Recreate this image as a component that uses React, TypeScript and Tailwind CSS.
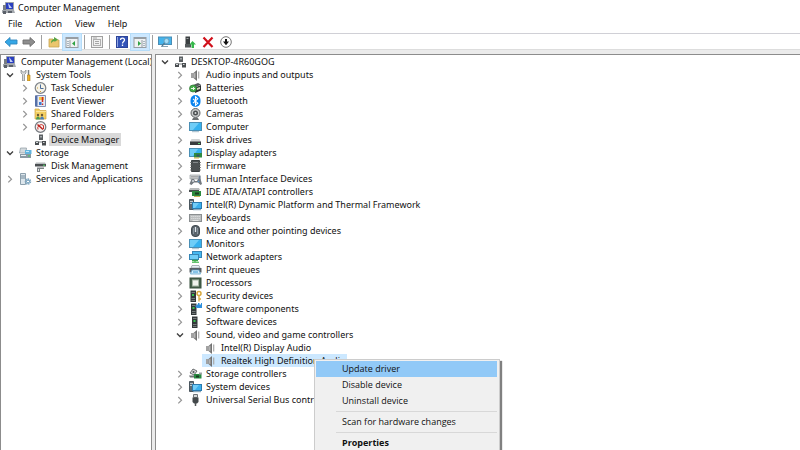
import { useState, type ReactNode } from 'react';

type IconName = keyof typeof icons;

interface TreeNode {
  label: string;
  icon: IconName;
  children?: TreeNode[];
  closed?: boolean;
}

const speaker = (
  <>
    <path d="M2 4h2.500v5H2z" fill="#a2a2a2" />
    <path d="M4.500 4 8 1v11L4.500 9z" fill="#727272" />
    <path d="M5 4.500 6.500 3.500v6L5 8.500z" fill="#b5b5b5" />
    <path d="M9.700 2.500v7" stroke="#a9a9a9" strokeWidth="1.200" fill="none" />
  </>
);

const monitor = (
  <>
    <rect x="0.500" y="1.500" width="12" height="8" fill="#35b1ef" stroke="#4a8fb5" />
    <path d="M1 2h9L4 9H1z" fill="#6fcdf7" />
    <path d="M3 10.700h7" stroke="#a5bcc9" />
  </>
);

const platform = (
  <>
    <path d="M0.500 0.500h4v10h-4z" fill="#5d6a73" stroke="#4a565e" />
    <path d="M1 2.500h3M1 4.500h2" stroke="#b9c6ce" />
    <rect x="3.500" y="3.500" width="9" height="6" fill="#3bb0ee" stroke="#2b7bb0" />
    <path d="M4 4h6L6 9H4z" fill="#72cdf8" />
    <path d="M4 10.700h8" stroke="#7197ae" />
  </>
);

const deviceManager = (
  <>
    <path d="M5 0.500h4V6H5z" fill="#5a5f62" />
    <path d="M6 2h2v1.500H6z" fill="#a4a9ac" />
    <path d="M2 7h9v2H2z" fill="#b9bcbe" />
    <path d="M1 7.500h4V11H1zM8 7h4v4.500H8z" fill="#4a4e51" />
    <path d="M2 8h2v1H2zM9 8h1.500v1H9z" fill="#d5d9db" />
  </>
);

const tower = (
  <>
    <rect x="3" y="0.500" width="5.500" height="11.500" fill="#33383a" />
    <path d="M4 2.500h3.500M4 8.500h3.500M4 10.500h3.500" stroke="#757c7d" />
    <rect x="4.500" y="4" width="2" height="2" fill="#35c24a" />
  </>
);

const icons = {
  speaker,
  monitor,
  platform,
  deviceManager,
  tower,
  console: (
    <>
      <path d="M3.500 0.500h8v7h-8z" fill="#2a3fc0" stroke="#9ba1a9" />
      <path d="M6 1l4 5H7z" fill="#c4d2f7" />
      <path d="M1 3h3v5H1z" fill="#777d85" />
      <path d="M0 8h12l1 3H0z" fill="#a3a8ae" />
      <path d="M1 9h3v3H1zM6 9h4v2H6z" fill="#5b616a" />
    </>
  ),
  tools: (
    <>
      <path d="M2 1v3l1.500 1.500V12h2V5.500L7 4V1L5.500 3h-2z" fill="#d8dadc" stroke="#808588" strokeWidth="0.700" />
      <path d="M9.500 1v5" stroke="#7b8084" strokeWidth="1.500" />
      <path d="M8.500 6h2.500v6H8.500z" fill="#f0b52c" stroke="#a77712" strokeWidth="0.600" />
    </>
  ),
  clock: (
    <>
      <circle cx="6.500" cy="6" r="5.300" fill="#f6f3e8" stroke="#7d8288" strokeWidth="1.200" />
      <path d="M6.500 2.500V6.500H9.500" fill="none" stroke="#4b6d9c" />
      <path d="M3 6h1M6 9.500h1" stroke="#c79a3a" />
    </>
  ),
  event: (
    <>
      <path d="M1.500 0.500h10v11h-10z" fill="#e3e8f3" stroke="#8492b5" />
      <path d="M1 1h2.500v10H1z" fill="#5670a8" />
      <path d="M5 2h5v3H5z" fill="#f0c649" />
      <path d="M8.500 2v5M8.500 8.500v1.500" stroke="#cf2a23" strokeWidth="1.500" />
      <path d="M5 7h2.500v3H5z" fill="#3e79cf" />
    </>
  ),
  sharedFolder: (
    <>
      <path d="M1 1h4l1 1.500h6V11H1z" fill="#f4d063" stroke="#cda543" strokeWidth="0.700" />
      <path d="M2 3.500h10" stroke="#fbe59d" />
      <circle cx="4" cy="7" r="1.200" fill="#6b5836" />
      <circle cx="8" cy="7" r="1.200" fill="#6b5836" />
      <path d="M2 11.500c0-4 4-4 4 0z" fill="#4d9a50" />
      <path d="M6 11.500c0-4 4-4 4 0z" fill="#4b7fb5" />
    </>
  ),
  performance: (
    <>
      <circle cx="6.500" cy="6" r="5.300" fill="#f7f2f2" stroke="#777b80" strokeWidth="1.200" />
      <path d="M4 8.500A3.500 3.500 0 0 1 9.500 4.500V8" fill="none" stroke="#c9322c" />
      <path d="M3.500 3.500 9 8.500" stroke="#bb211c" strokeWidth="1.500" />
    </>
  ),
  storage: (
    <>
      <path d="M1.500 1h6l-0.500 5H0.500z" fill="#d3dade" stroke="#8d9aa2" strokeWidth="0.700" />
      <path d="M1 7h11v4H1z" fill="#8999a3" />
      <path d="M2 8.500h5" stroke="#e9f1f5" />
      <path d="M6 3h6.500v4H6z" fill="#63b4de" />
      <path d="M7 4h3v1H7z" fill="#c6e9f8" />
      <path d="M9 8.500h2v1H9z" fill="#47c95d" />
    </>
  ),
  diskManagement: (
    <>
      <path d="M1 4h11v2.500H1z" fill="#4b4f52" />
      <path d="M2 2.500h9L12 4H1z" fill="#b8bcbe" />
      <path d="M3 7.500h7v1.500H6v3H3z" fill="#7d8285" />
      <path d="M9 4.700h2v1H9z" fill="#4fd164" />
      <path d="M4 9h1v2H4z" fill="#e3e6e7" />
    </>
  ),
  services: (
    <>
      <path d="M1.500 0.500h5v11h-5z" fill="#dde6ec" stroke="#8da0ad" />
      <path d="M2 3h4M2 5h4" stroke="#70899a" />
      <circle cx="9" cy="8.500" r="2.500" fill="none" stroke="#7fa6bf" strokeWidth="1.500" strokeDasharray="1.500 0.700" />
      <circle cx="9" cy="8.500" r="1.500" fill="none" stroke="#5b90b2" />
    </>
  ),
  battery: (
    <>
      <path d="M4 3 9 1l3 1.500-6 3z" fill="#565b5d" />
      <path d="M5 6l7-3v5.500L6 11z" fill="#2c3132" />
      <path d="M8 6l3-1v2L8 8z" fill="#cfd2b8" />
      <circle cx="4" cy="6.500" r="3.500" fill="#46ad4c" stroke="#2c7431" strokeWidth="0.700" />
      <path d="M2 6.500h4M4.500 5v3" stroke="#e8f7e6" />
    </>
  ),
  bluetooth: (
    <>
      <rect x="1.500" y="0" width="10" height="12" rx="5" fill="#0a84f0" />
      <path d="M4 3.800 8.800 8.200 6.500 10.300V1.700L8.800 3.800 4 8.200" fill="none" stroke="#fff" strokeWidth="1.100" />
    </>
  ),
  camera: (
    <>
      <circle cx="6.500" cy="5" r="4.500" fill="#c9cbcc" stroke="#5d6163" strokeWidth="1" />
      <circle cx="6.500" cy="5" r="2.500" fill="#4b4f51" />
      <circle cx="6.500" cy="5" r="1" fill="#d9dcdd" />
      <path d="M4 10h5l1 2H3z" fill="#6a6e70" />
    </>
  ),
  disk: (
    <>
      <path d="M2.500 5h8L12 8H1z" fill="#cfd2d3" />
      <path d="M1 7.500h11v3.500H1z" fill="#373c3e" />
      <path d="M9 9h2v1H9z" fill="#5fd274" />
    </>
  ),
  display: (
    <>
      <rect x="0.500" y="1.500" width="12" height="8" fill="#35b1ef" stroke="#4a8fb5" />
      <path d="M1 2h8L4 9H1z" fill="#6fcdf7" />
      <path d="M5 6h8v4.500H5z" fill="#2f8b41" />
      <path d="M7.500 7.500h3v2h-3z" fill="#37536a" />
      <path d="M5 11h5" stroke="#d8b146" />
    </>
  ),
  firmware: (
    <>
      <path d="M2.500 0.500h8v11h-8z" fill="#4c5052" stroke="#3b4042" />
      <path d="M1 2.500h1.500M1 5h1.500M1 7.500h1.500M1 10h1.500M10.500 2.500H12M10.500 5H12M10.500 7.500H12M10.500 10H12" stroke="#8d8d8d" />
      <path d="M4 2.500h5" stroke="#85898b" />
    </>
  ),
  hid: (
    <>
      <path d="M1 2h10v4H1z" fill="#d3d6d8" stroke="#9a9ea1" strokeWidth="0.700" />
      <path d="M2 3.500h7M2 5h7" stroke="#8a8a8a" strokeWidth="0.600" />
      <path d="M0.500 11 2.500 6H5l1 2h2l1-2h2.500l1.500 5-1.500 1L9 9.500H5L2.500 12z" fill="#747a80" />
      <path d="M10.500 3v4" stroke="#6f7f92" strokeWidth="2" />
      <circle cx="4" cy="8" r="1" fill="#d5dbe0" />
      <circle cx="9.500" cy="8.500" r="0.800" fill="#5a9bd0" />
    </>
  ),
  ide: (
    <>
      <path d="M1 2h9l1 2H0z" fill="#b7babb" />
      <path d="M0 4h10v2H0z" fill="#494e50" />
      <path d="M3 5h9v5H3z" fill="#2c8a3d" />
      <path d="M6 6.500h4v2H6z" fill="#1a3b22" />
      <path d="M5 10.500h6" stroke="#c9b25a" />
    </>
  ),
  keyboard: (
    <>
      <rect x="0.500" y="2.500" width="12" height="7" fill="#bbbebf" stroke="#8a8e90" />
      <path d="M2 4.500h9M2 6.500h9" stroke="#d6d8d9" strokeDasharray="1.500 0.500" />
      <path d="M3.500 8.500h6" stroke="#e0e2e2" />
    </>
  ),
  mouse: (
    <>
      <rect x="2.500" y="0.500" width="8" height="11" rx="3.500" fill="#59636b" stroke="#414a51" />
      <path d="M4.500 3v6M8.500 3v6" stroke="#87929b" />
      <path d="M6.500 2v5" stroke="#dfe5ea" strokeWidth="1.300" />
    </>
  ),
  network: (
    <>
      <rect x="3.500" y="0.500" width="9" height="6" fill="#46b8f0" stroke="#3585b5" />
      <rect x="0.500" y="3.500" width="9" height="5" fill="#6fcdf7" stroke="#3585b5" />
      <path d="M3 9.500h6M6 9v2" stroke="#3faa4c" strokeWidth="1.300" />
      <path d="M3 11.300h7" stroke="#5cc268" strokeWidth="1.300" />
    </>
  ),
  printer: (
    <>
      <path d="M3 1.500h7l1 2.500H2z" fill="#e7eff5" stroke="#8b959c" strokeWidth="0.700" />
      <path d="M0.500 4h12v4.500h-12z" fill="#596066" />
      <path d="M3 6h7l1.500 4h-10z" fill="#d3ecf9" stroke="#4e9bc6" strokeWidth="0.700" />
      <path d="M4 8h5" stroke="#379bd5" />
    </>
  ),
  processor: (
    <>
      <rect x="1" y="1" width="11" height="10" fill="#46614c" stroke="#36503d" strokeWidth="1" />
      <rect x="3.500" y="3" width="6" height="6" fill="#f0f3ee" stroke="#a5b5a5" strokeWidth="1" />
    </>
  ),
  security: (
    <>
      <g transform="translate(-1.500 0)">{tower}</g>
      <circle cx="10" cy="3.500" r="2" fill="none" stroke="#d9a93f" strokeWidth="1.500" />
      <path d="M10 5v6.500M10 9h2" stroke="#d9a93f" strokeWidth="1.300" />
    </>
  ),
  component: (
    <>
      <g transform="translate(-1 0)">{tower}</g>
      <path d="M7.500 1.500h1.500V0h1.500v1.500H12V0h1v5H7.500V4H6.500V2.700h1z" fill="#2e8fdd" />
    </>
  ),
  storageController: (
    <>
      <path d="M1 5 4 1l4 2-3 4z" fill="#d6d9da" stroke="#5c6062" strokeWidth="0.900" />
      <circle cx="4.500" cy="4" r="1" fill="#4d5153" />
      <path d="M0 7.500h6l1 2H1z" fill="#6d7375" />
      <path d="M5 6h7.500v4.500H5z" fill="#278a40" />
      <path d="M7 7.500h3v2H7z" fill="#193a21" />
      <path d="M10 4.500h3v2h-3z" fill="#9fa3a5" />
    </>
  ),
  usb: (
    <>
      <path d="M4.500 0.500h4v3h-4z" fill="#d4d7d8" stroke="#6d7275" />
      <path d="M3.500 3.500h6V8L8 9.500H5L3.500 8z" fill="#43484a" />
      <path d="M6.500 9v3" stroke="#55595b" strokeWidth="1.500" />
    </>
  ),
};

const leftTree: TreeNode[] = [
  {
    label: 'System Tools',
    icon: 'tools',
    children: [
      { label: 'Task Scheduler', icon: 'clock', closed: true },
      { label: 'Event Viewer', icon: 'event', closed: true },
      { label: 'Shared Folders', icon: 'sharedFolder', closed: true },
      { label: 'Performance', icon: 'performance', closed: true },
      { label: 'Device Manager', icon: 'deviceManager' },
    ],
  },
  {
    label: 'Storage',
    icon: 'storage',
    children: [{ label: 'Disk Management', icon: 'diskManagement' }],
  },
  { label: 'Services and Applications', icon: 'services', closed: true },
];

const deviceTree: TreeNode[] = [
  {
    label: 'DESKTOP-4R60GOG',
    icon: 'deviceManager',
    children: [
      { label: 'Audio inputs and outputs', icon: 'speaker', closed: true },
      { label: 'Batteries', icon: 'battery', closed: true },
      { label: 'Bluetooth', icon: 'bluetooth', closed: true },
      { label: 'Cameras', icon: 'camera', closed: true },
      { label: 'Computer', icon: 'monitor', closed: true },
      { label: 'Disk drives', icon: 'disk', closed: true },
      { label: 'Display adapters', icon: 'display', closed: true },
      { label: 'Firmware', icon: 'firmware', closed: true },
      { label: 'Human Interface Devices', icon: 'hid', closed: true },
      { label: 'IDE ATA/ATAPI controllers', icon: 'ide', closed: true },
      { label: 'Intel(R) Dynamic Platform and Thermal Framework', icon: 'platform', closed: true },
      { label: 'Keyboards', icon: 'keyboard', closed: true },
      { label: 'Mice and other pointing devices', icon: 'mouse', closed: true },
      { label: 'Monitors', icon: 'monitor', closed: true },
      { label: 'Network adapters', icon: 'network', closed: true },
      { label: 'Print queues', icon: 'printer', closed: true },
      { label: 'Processors', icon: 'processor', closed: true },
      { label: 'Security devices', icon: 'security', closed: true },
      { label: 'Software components', icon: 'component', closed: true },
      { label: 'Software devices', icon: 'tower', closed: true },
      {
        label: 'Sound, video and game controllers',
        icon: 'speaker',
        children: [
          { label: 'Intel(R) Display Audio', icon: 'speaker' },
          { label: 'Realtek High Definition Audio', icon: 'speaker' },
        ],
      },
      { label: 'Storage controllers', icon: 'storageController', closed: true },
      { label: 'System devices', icon: 'platform', closed: true },
      { label: 'Universal Serial Bus controllers', icon: 'usb', closed: true },
    ],
  },
];

function Icon({ name }: { name: IconName }) {
  return (
    <svg viewBox="0 0 13 12" className="h-3 w-[13px] shrink-0" aria-hidden="true">
      {icons[name]}
    </svg>
  );
}

function Chevron({ open }: { open: boolean }) {
  return (
    <svg viewBox="0 0 8 8" className="size-2" fill="none" aria-hidden="true">
      {open ? (
        <path d="M1 2.500 4 5.500 7 2.500" stroke="#404040" strokeWidth="1.400" />
      ) : (
        <path d="M2.300 1 5.500 4.200 2.300 7.400" stroke="#959595" strokeWidth="1.200" />
      )}
    </svg>
  );
}

interface TreeItemProps {
  node: TreeNode;
  rowHighlight?: string;
  labelHighlight?: string;
  menu?: ReactNode;
}

function TreeItem({ node, rowHighlight, labelHighlight, menu }: TreeItemProps) {
  const [open, setOpen] = useState(!node.closed);
  const hasToggle = node.closed || !!node.children;
  const rowSelected = node.label === rowHighlight;
  const labelSelected = node.label === labelHighlight;

  return (
    <li role="treeitem" aria-selected={rowSelected || labelSelected}>
      <div className="relative flex h-[13px] items-center">
        <span className="flex w-[15px] shrink-0 justify-center">
          {hasToggle && (
            <button type="button" aria-label={`Toggle ${node.label}`} onClick={() => setOpen(!open)}>
              <Chevron open={open} />
            </button>
          )}
        </span>
        <span className={`flex h-full items-center gap-0.5 pl-0.5 ${rowSelected ? 'bg-[#cce8ff]' : ''}`}>
          <Icon name={node.icon} />
          <span className={`h-full px-0.5 leading-[13px] ${labelSelected ? 'bg-[#d9d9d9]' : ''}`}>
            {node.label}
          </span>
        </span>
        {rowSelected && menu}
      </div>
      {open && node.children && (
        <ul role="group" className="pl-[15px]">
          {node.children.map((child) => (
            <TreeItem
              key={child.label}
              node={child}
              rowHighlight={rowHighlight}
              labelHighlight={labelHighlight}
              menu={menu}
            />
          ))}
        </ul>
      )}
    </li>
  );
}

function ContextMenu() {
  const item = 'block h-4 w-full pl-[26px] text-left leading-4 hover:bg-[#91c9f7]';
  return (
    <div
      role="menu"
      className="absolute top-[5px] left-[127px] z-10 w-[186px] border border-[#cccccc] bg-[#f0f0f0] p-px pr-0.5 font-['Open_Sans','Noto_Sans',sans-serif] shadow-[2px_2px_1px_#808080]"
    >
      <button type="button" role="menuitem" className={`${item} bg-[#91c9f7]`}>Update driver</button>
      <button type="button" role="menuitem" className={item}>Disable device</button>
      <button type="button" role="menuitem" className={item}>Uninstall device</button>
      <hr className="my-0.5 ml-5 border-[#d8d8d8]" />
      <button type="button" role="menuitem" className={item}>Scan for hardware changes</button>
      <hr className="my-0.5 ml-5 border-[#d8d8d8]" />
      <button type="button" role="menuitem" className={`${item} font-bold`}>Properties</button>
    </div>
  );
}

function ToolButton({ label, active, children }: { label: string; active?: boolean; children: ReactNode }) {
  return (
    <button
      type="button"
      aria-label={label}
      className={`flex h-4 w-[18px] items-center justify-center ${
        active ? 'bg-[#cce8ff] outline outline-[#b5dcf8]' : ''
      }`}
    >
      <svg viewBox="0 0 14 12" className="h-3 w-3.5" fill="none" aria-hidden="true">
        {children}
      </svg>
    </button>
  );
}

function Separator() {
  return <span className="mx-[3px] h-3.5 w-px bg-[#a0a0a0]" />;
}

function Toolbar() {
  return (
    <div
      role="toolbar"
      className="flex h-[17px] items-center border-t border-b border-t-[#d0d0d6] border-b-[#dddddd] bg-white pl-0.5"
    >
      <ToolButton label="Back">
        <path d="M1 6 6 1.500V4h7v4H6v2.500z" fill="#35a7e6" stroke="#2f86bd" strokeWidth="0.900" />
      </ToolButton>
      <ToolButton label="Forward">
        <path d="M13 6 8 1.500V4H1v4h7v2.500z" fill="#8d8d8d" stroke="#6e6e6e" strokeWidth="0.900" />
      </ToolButton>
      <Separator />
      <ToolButton label="Up one level">
        <path d="M2 3h4l1 1h5v7H2z" fill="#ebc66e" stroke="#c9a452" strokeWidth="0.800" />
        <path d="M4 7.500c0-3 1-4 3-4.500V1l4 2.500L7.500 6V5C6 5.200 5 6 4 7.500z" fill="#5aa545" />
      </ToolButton>
      <ToolButton label="Show or hide console tree" active>
        <rect x="1" y="1.500" width="12" height="10" fill="#f0f2f3" stroke="#979ea4" />
        <path d="M1 2.500h12M5 4v7" stroke="#979ea4" />
        <path d="M2 5.500h2M2 7.500h2M2 9.500h2" stroke="#a8b6c0" />
        <path d="M10 5v5L7 7.500z" fill="#2fa243" />
      </ToolButton>
      <Separator />
      <ToolButton label="Properties">
        <rect x="1.500" y="0.500" width="11" height="11" fill="#f1f1f1" stroke="#a0a0a0" />
        <rect x="3.500" y="3.500" width="7" height="6" stroke="#b0b0b0" />
        <path d="M5 5.500h4M5 7.500h4M3 2h4" stroke="#a6a6a6" />
      </ToolButton>
      <Separator />
      <ToolButton label="Help">
        <rect x="1.500" y="0.500" width="11" height="11" fill="#3353b8" stroke="#2d459a" />
        <path d="M2.500 1v10" stroke="#8fa4e0" />
        <path d="M5.500 4c0-2.500 4-2.500 4 0 0 1.500-2 1.500-2 3.500M7.500 8.500V10" stroke="#fff" strokeWidth="1.300" />
      </ToolButton>
      <ToolButton label="Show or hide action pane" active>
        <rect x="1" y="1.500" width="12" height="10" fill="#f0f2f3" stroke="#979ea4" />
        <path d="M1 2.500h12M9 4v7" stroke="#979ea4" />
        <path d="M10 5.500h2M10 7.500h2M10 9.500h2" stroke="#a8b6c0" />
        <path d="M5 5v5l3-2.500z" fill="#2fa243" />
      </ToolButton>
      <Separator />
      <ToolButton label="Scan for hardware changes">
        <rect x="0.500" y="1" width="13" height="7.500" fill="#45b4ec" stroke="#4b8db5" />
        <path d="M3 10.500h7" stroke="#8aa3b2" />
        <circle cx="8.500" cy="5" r="2.500" fill="#a5def7" stroke="#6fa0bb" />
        <path d="M6.500 7 4 10" stroke="#4f7a92" strokeWidth="1.300" />
      </ToolButton>
      <Separator />
      <ToolButton label="Update driver">
        <path d="M2.500 0.500H7V8H2.500z" fill="#3a3f41" />
        <path d="M2 8h6v3.500H2z" fill="#54595b" />
        <path d="M3.500 2.500h2" stroke="#9ca1a3" />
        <path d="M9.500 5 13 8.500h-2V12H8.500V8.500H6.500z" fill="#35b84a" />
      </ToolButton>
      <ToolButton label="Uninstall device">
        <path d="M2.500 1.500 11.500 11M11.500 1.500 2.500 11" stroke="#d0101b" strokeWidth="2.200" />
      </ToolButton>
      <ToolButton label="Disable device">
        <circle cx="7" cy="6" r="5.300" fill="#fff" stroke="#777" />
        <path d="M6 3h2v2.500h2L7 9.300 4 5.500h2z" fill="#111" />
      </ToolButton>
    </div>
  );
}

export default function App() {
  return (
    <div className="flex h-screen flex-col overflow-hidden bg-[#ebebeb] font-['Noto_Sans','Open_Sans',sans-serif] text-[9px] text-[#111111]">
      <header className="flex h-4 items-center gap-[3px] bg-white pl-0.5">
        <Icon name="console" />
        <h1>Computer Management</h1>
      </header>

      <nav className="flex h-4 items-center gap-[13px] bg-white pl-2">
        {['File', 'Action', 'View', 'Help'].map((name) => (
          <button key={name} type="button">{name}</button>
        ))}
      </nav>

      <div className="bg-white pt-px">
        <Toolbar />
      </div>

      <main className="mt-1 flex min-h-0 flex-1 gap-[3px] whitespace-nowrap">
        {/* Console tree */}
        <aside className="w-[152px] shrink-0 overflow-hidden border border-b-0 border-[#8c8c8c] bg-white">
          <div className="flex h-[13px] items-center gap-[5px] pl-0.5">
            <Icon name="console" />
            <span>Computer Management (Local)</span>
          </div>
          <ul role="tree" aria-label="Console" className="pl-px">
            {leftTree.map((node) => (
              <TreeItem key={node.label} node={node} labelHighlight="Device Manager" />
            ))}
          </ul>
        </aside>

        {/* Device tree */}
        <section className="flex-1 overflow-hidden border border-r-0 border-b-0 border-[#8c8c8c] bg-white">
          <ul role="tree" aria-label="Devices" className="pl-px">
            {deviceTree.map((node) => (
              <TreeItem
                key={node.label}
                node={node}
                rowHighlight="Realtek High Definition Audio"
                menu={<ContextMenu />}
              />
            ))}
          </ul>
        </section>
      </main>
    </div>
  );
}
